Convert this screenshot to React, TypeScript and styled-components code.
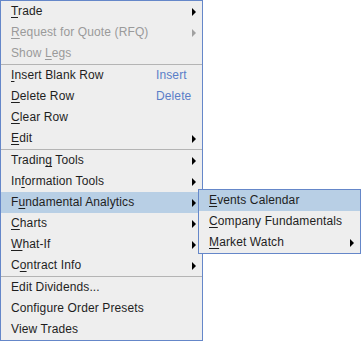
import React from "react";
import styled, { createGlobalStyle } from "styled-components";

const Global = createGlobalStyle`
  html, body { margin: 0; padding: 0; background: #ffffff; }
  body { font-family: "Liberation Sans", Arial, sans-serif; }
`;

const Stage = styled.div`
  position: relative;
  width: 361px;
  height: 341px;
`;

const Menu = styled.div`
  box-sizing: border-box;
  width: 203px;
  border: 1px solid #6587c9;
  background: #eeeeee;
  display: flex;
  flex-direction: column;
`;

const SubMenu = styled(Menu)`
  position: absolute;
  left: 198px;
  top: 189px;
  width: 163px;
`;

const Item = styled.div<{ $active?: boolean; $disabled?: boolean }>`
  display: grid;
  grid-template-columns: 145px 1fr 14px;
  align-items: center;
  height: 21px;
  padding-left: 10px;
  font-size: 12px;
  letter-spacing: 0.12px;
  line-height: 21px;
  white-space: nowrap;
  color: ${(p) => (p.$disabled ? "#9a9a9a" : "#1e1e1e")};
  background: ${(p) => (p.$active ? "#b8cfe5" : "transparent")};
  u { text-decoration-thickness: 1px; text-underline-offset: 2px; }
`;

const SubItem = styled(Item)`
  grid-template-columns: 1fr 14px;
`;

const Accel = styled.span`
  color: #5a7ec8;
`;

const ArrowBox = styled.span`
  display: flex;
  align-items: center;
  padding-left: 4px;
`;

const Separator = styled.div`
  height: 1px;
  background: #b4b4b4;
`;

const Arrow = ({ disabled }: { disabled?: boolean }) => (
  <ArrowBox>
    <svg width="4" height="8" viewBox="0 0 4 8">
      <polygon points="0,0 4,4 0,8" fill={disabled ? "#a0a0a0" : "#000000"} />
    </svg>
  </ArrowBox>
);

type Entry = {
  pre?: string;
  u?: string;
  post: string;
  accel?: string;
  arrow?: boolean;
  disabled?: boolean;
  active?: boolean;
} | "sep";

const mainItems: Entry[] = [
  { u: "T", post: "rade", arrow: true },
  { u: "R", post: "equest for Quote (RFQ)", arrow: true, disabled: true },
  { pre: "Show ", u: "L", post: "egs", disabled: true },
  "sep",
  { u: "I", post: "nsert Blank Row", accel: "Insert" },
  { u: "D", post: "elete Row", accel: "Delete" },
  { u: "C", post: "lear Row" },
  { u: "E", post: "dit", arrow: true },
  "sep",
  { pre: "Tradin", u: "g", post: " Tools", arrow: true },
  { pre: "In", u: "f", post: "ormation Tools", arrow: true },
  { pre: "F", u: "u", post: "ndamental Analytics", arrow: true, active: true },
  { u: "C", post: "harts", arrow: true },
  { u: "W", post: "hat-If", arrow: true },
  { pre: "C", u: "o", post: "ntract Info", arrow: true },
  "sep",
  { post: "Edit Dividends..." },
  { post: "Configure Order Presets" },
  { post: "View Trades" },
];

const subItems: Entry[] = [
  { u: "E", post: "vents Calendar", active: true },
  { u: "C", post: "ompany Fundamentals" },
  { u: "M", post: "arket Watch", arrow: true },
];

const Label = ({ e }: { e: Exclude<Entry, "sep"> }) => (
  <span>
    {e.pre}
    {e.u && <u>{e.u}</u>}
    {e.post}
  </span>
);

export default function App() {
  return (
    <Stage>
      <Global />
      <Menu>
        {mainItems.map((e, i) =>
          e === "sep" ? (
            <Separator key={i} />
          ) : (
            <Item key={i} $active={e.active} $disabled={e.disabled}>
              <Label e={e} />
              {e.accel ? <Accel>{e.accel}</Accel> : <span />}
              {e.arrow ? <Arrow disabled={e.disabled} /> : <span />}
            </Item>
          )
        )}
      </Menu>
      <SubMenu>
        {subItems.map((e, i) =>
          e === "sep" ? (
            <Separator key={i} />
          ) : (
            <SubItem key={i} $active={e.active}>
              <Label e={e} />
              {e.arrow ? <Arrow /> : <span />}
            </SubItem>
          )
        )}
      </SubMenu>
    </Stage>
  );
}
